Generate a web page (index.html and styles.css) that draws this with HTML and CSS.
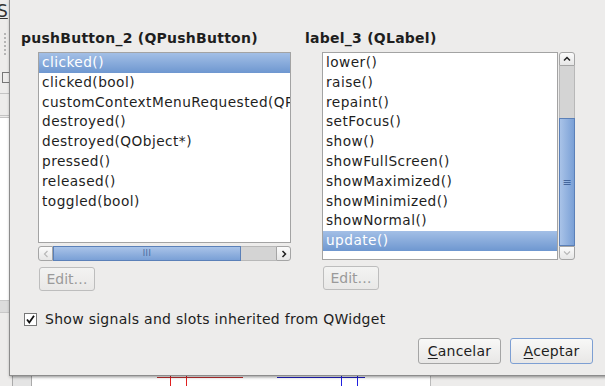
FILE: index.html
```html
<!DOCTYPE html>
<html lang="es">
<head>
    <meta charset="UTF-8">
    <title>Configurar conexión</title>
    <link rel="stylesheet" href="styles.css">
</head>
<body>
    <div class="desk">
        <!-- designer window behind the dialog -->
        <div class="bg-left">
            <span class="bg-letter">S</span>
            <div class="bg-grip"></div>
            <div class="bg-icon"></div>
            <div class="bg-white"></div>
            <div class="bg-bar"></div>
        </div>
        <div class="bg-right">
            <span class="bg-txt t1">e</span>
            <div class="bg-head"></div>
            <div class="bg-sel"></div>
            <div class="bg-rows"></div>
            <span class="bg-txt t2">lit</span>
            <div class="bg-box"></div>
            <span class="bg-txt t3">ge</span>
            <div class="bg-bar2"></div>
            <div class="bg-yel y1">op</div>
            <div class="bg-blue">ri</div>
            <div class="bg-yel y2">on</div>
            <span class="bg-txt t4">or</span>
        </div>
        <div class="bg-bottom">
            <div class="bb-col"></div>
            <div class="bb-line red"></div>
            <div class="bb-pair red"></div>
            <div class="bb-line blue"></div>
            <div class="bb-pair blue"></div>
            <div class="bb-edge"></div>
        </div>

        <div class="dialog">
            <div class="columns">
                <div class="col">
                    <h2 class="title">pushButton_2 (QPushButton)</h2>
                    <div class="list-wrap">
                        <ul class="list left-list">
                            <li class="sel">clicked()</li>
                            <li>clicked(bool)</li>
                            <li>customContextMenuRequested(QPoint)</li>
                            <li>destroyed()</li>
                            <li>destroyed(QObject*)</li>
                            <li>pressed()</li>
                            <li>released()</li>
                            <li>toggled(bool)</li>
                        </ul>
                        <div class="hscroll">
                            <span class="sb-btn off">
                                <svg width="6" height="8" viewBox="0 0 6 8"><path d="M4.5 1 L1.5 4 L4.5 7" fill="none" stroke="#b8b8b8" stroke-width="1.2"/></svg>
                            </span>
                            <span class="h-thumb"><span class="grip-h">III</span></span>
                            <span class="h-trough"></span>
                            <span class="sb-btn">
                                <svg width="6" height="8" viewBox="0 0 6 8"><path d="M1.5 1 L4.5 4 L1.5 7" fill="none" stroke="#222" stroke-width="1.5"/></svg>
                            </span>
                        </div>
                    </div>
                    <button class="edit" disabled>Edit…</button>
                </div>
                <div class="col">
                    <h2 class="title">label_3 (QLabel)</h2>
                    <div class="list-row">
                        <ul class="list right-list">
                            <li>lower()</li>
                            <li>raise()</li>
                            <li>repaint()</li>
                            <li>setFocus()</li>
                            <li>show()</li>
                            <li>showFullScreen()</li>
                            <li>showMaximized()</li>
                            <li>showMinimized()</li>
                            <li>showNormal()</li>
                            <li class="sel">update()</li>
                        </ul>
                        <div class="vscroll">
                            <span class="sb-btn v top">
                                <svg width="8" height="6" viewBox="0 0 8 6"><path d="M1 4.5 L4 1.5 L7 4.5" fill="none" stroke="#222" stroke-width="1.5"/></svg>
                            </span>
                            <span class="v-trough"></span>
                            <span class="v-thumb"><span class="grip-v">≡</span></span>
                            <span class="sb-btn v bottom off">
                                <svg width="8" height="6" viewBox="0 0 8 6"><path d="M1 1.5 L4 4.5 L7 1.5" fill="none" stroke="#b8b8b8" stroke-width="1.2"/></svg>
                            </span>
                        </div>
                    </div>
                    <button class="edit" disabled>Edit…</button>
                </div>
            </div>

            <label class="check">
                <span class="box">
                    <svg width="11" height="11" viewBox="0 0 11 11"><path d="M2 5.5 L4.3 8.5 L9 1.8" fill="none" stroke="#111" stroke-width="1.8"/></svg>
                </span>
                Show signals and slots inherited from QWidget
            </label>

            <div class="actions">
                <button class="btn"><u>C</u>ancelar</button>
                <button class="btn default"><u>A</u>ceptar</button>
            </div>
        </div>
    </div>
</body>
</html>
```

FILE: styles.css
```css
body {
    margin: 0;
    font-family: "DejaVu Sans", sans-serif;
    font-size: 14px;
    color: #1e1e1e;
    background: #edeceb;
}
.desk {
    position: relative;
    width: 605px;
    height: 386px;
    overflow: hidden;
    background: #edeceb;
}

/* ---- background window pieces ---- */
.bg-left {
    position: absolute;
    left: 0;
    top: 0;
    width: 10px;
    height: 386px;
}
.bg-letter {
    position: absolute;
    left: -3px;
    top: 1px;
    font-size: 17px;
    text-decoration: underline;
    color: #333;
}
.bg-grip {
    position: absolute;
    left: 4px;
    top: 33px;
    width: 2px;
    height: 22px;
    border-left: 2px dotted #b5b5b5;
}
.bg-icon {
    position: absolute;
    left: 2px;
    top: 72px;
    width: 6px;
    height: 9px;
    border: 1px solid #777;
}
.bg-white {
    position: absolute;
    left: 0;
    top: 93px;
    width: 10px;
    height: 21px;
    border-top: 1px solid #c4c4c4;
    border-bottom: 3px double #c4c4c4;
}
.bg-bar {
    position: absolute;
    left: 0;
    top: 300px;
    width: 10px;
    height: 11px;
    background: #dcdcdc;
    border-top: 1px solid #c8c8c8;
    border-bottom: 1px solid #c8c8c8;
}
.bg-left::after {
    content: "";
    position: absolute;
    left: 0;
    top: 118px;
    width: 10px;
    height: 182px;
    background: #fff;
}

.bg-right {
    position: absolute;
    left: 596px;
    top: 0;
    width: 9px;
    height: 386px;
    border-left: 1px solid #c9c9c9;
    font-size: 13px;
}
.bg-txt {
    position: absolute;
    left: 2px;
    color: #222;
}
.t1 { top: 66px; }
.t2 { top: 176px; }
.t3 { top: 247px; }
.t4 { top: 338px; }
.bg-head {
    position: absolute;
    left: 0;
    top: 92px;
    width: 9px;
    height: 20px;
    border-top: 1px solid #c4c4c4;
    background: #e6e6e6;
}
.bg-sel {
    position: absolute;
    left: 3px;
    top: 113px;
    width: 6px;
    height: 12px;
    background: #6f96cf;
}
.bg-rows {
    position: absolute;
    left: 0;
    top: 126px;
    width: 9px;
    height: 24px;
    background: #fff;
}
.bg-box {
    position: absolute;
    left: 0;
    top: 197px;
    width: 9px;
    height: 27px;
    background: #fff;
    border-top: 1px solid #bdbdbd;
    border-bottom: 1px solid #bdbdbd;
}
.bg-bar2 {
    position: absolute;
    left: 0;
    top: 269px;
    width: 9px;
    height: 20px;
    background: #e2e2e2;
    border-top: 1px solid #c4c4c4;
}
.bg-yel {
    position: absolute;
    left: 0;
    width: 9px;
    height: 17px;
    padding-left: 2px;
    background: #fbf7c4;
    line-height: 17px;
}
.y1 { top: 290px; }
.y2 { top: 323px; }
.bg-blue {
    position: absolute;
    left: 0;
    top: 306px;
    width: 9px;
    height: 17px;
    padding-left: 2px;
    background: #6f96cf;
    color: #fff;
    line-height: 17px;
}

.bg-bottom {
    position: absolute;
    left: 0;
    top: 376px;
    width: 605px;
    height: 10px;
    background: #fff;
}
.bb-col {
    position: absolute;
    left: 0;
    top: 0;
    width: 12px;
    height: 10px;
    background: #edeceb;
}
.bb-col::after {
    content: "";
    position: absolute;
    left: 12px;
    top: 0;
    width: 18px;
    height: 10px;
    background: #e4e4e4;
    border-left: 1px solid #aaa;
    border-right: 1px solid #aaa;
}
.bb-line {
    position: absolute;
    top: 1px;
    height: 1px;
}
.bb-line.red {
    left: 157px;
    width: 86px;
    background: #c03030;
}
.bb-line.blue {
    left: 277px;
    width: 88px;
    background: #2020c0;
}
.bb-pair {
    position: absolute;
    top: 0;
    width: 15px;
    height: 10px;
}
.bb-pair.red {
    left: 170px;
    border-left: 1px solid #e02020;
    border-right: 1px solid #e02020;
}
.bb-pair.blue {
    left: 341px;
    border-left: 1px solid #2020e0;
    border-right: 1px solid #2020e0;
}
.bb-edge {
    position: absolute;
    left: 430px;
    top: 0;
    width: 175px;
    height: 10px;
    background: #edeceb;
    border-left: 1px solid #bbb;
}

/* ---- dialog ---- */
.dialog {
    position: absolute;
    left: 9px;
    top: -1px;
    width: 572px;
    height: 346px;
    padding: 29px 13px 0 11px;
    background: #edeceb;
    border: 1px solid #8c8c8c;
    box-shadow: 1px 1px 3px rgba(0, 0, 0, 0.45);
    display: flex;
    flex-direction: column;
}
.columns {
    display: flex;
    gap: 14px;
}
.col {
    width: 270px;
}
.title {
    margin: 0 0 5px;
    height: 18px;
    font-size: 14px;
    line-height: 18px;
    font-weight: bold;
    letter-spacing: 0.25px;
    white-space: nowrap;
}
.list-wrap {
    margin-left: 17px;
    width: 253px;
}
.list {
    margin: 0;
    padding: 0;
    list-style: none;
    background: #fff;
    border: 1px solid #a3a3a3;
    overflow: hidden;
    font-size: 13.7px;
    letter-spacing: 0.45px;
}
.list li {
    height: 19.8px;
    line-height: 19.8px;
    padding-left: 3px;
    white-space: nowrap;
}
.list li.sel {
    color: #fff;
    background: linear-gradient(#a3bfe6, #6e97d0);
}
.left-list {
    height: 189px;
}
.right-list {
    width: 234px;
    height: 206px;
}
.list-row {
    display: flex;
    gap: 1px;
    margin-left: 17px;
}

/* scrollbars */
.hscroll {
    display: flex;
    height: 15px;
    margin-top: 3px;
}
.sb-btn {
    width: 13px;
    height: 13px;
    border: 1px solid #a5a5a5;
    background: linear-gradient(#fbfbfb, #e6e6e6);
    display: flex;
    align-items: center;
    justify-content: center;
}
.hscroll .sb-btn:first-child {
    border-radius: 3px 0 0 3px;
}
.hscroll .sb-btn:last-child {
    border-radius: 0 3px 3px 0;
}
.h-thumb {
    width: 186px;
    border: 1px solid #5b80b8;
    background: linear-gradient(#a9c3e8, #7aa0d6);
    display: flex;
    align-items: center;
    justify-content: center;
}
.grip-h {
    font-size: 8px;
    color: #44669c;
    letter-spacing: 0.5px;
}
.h-trough {
    flex: 1;
    background: #d4d4d4;
    border-top: 1px solid #b8b8b8;
    border-bottom: 1px solid #b8b8b8;
}
.vscroll {
    width: 16px;
    height: 208px;
    display: flex;
    flex-direction: column;
}
.sb-btn.v {
    width: 14px;
    height: 12px;
}
.sb-btn.top {
    border-radius: 3px 3px 0 0;
}
.sb-btn.bottom {
    border-radius: 0 0 3px 3px;
}
.v-trough {
    height: 52px;
    background: #d4d4d4;
    border-left: 1px solid #b8b8b8;
    border-right: 1px solid #b8b8b8;
}
.v-thumb {
    flex: 1;
    border: 1px solid #5b80b8;
    background: linear-gradient(90deg, #a9c3e8, #7aa0d6);
    display: flex;
    align-items: center;
    justify-content: center;
}
.grip-v {
    font-size: 11px;
    color: #44669c;
}

.edit {
    display: block;
    margin: 6px 0 0 18px;
    width: 56px;
    height: 24px;
    padding: 0;
    font-family: "DejaVu Sans", sans-serif;
    font-size: 14px;
    color: #9a9a9a;
    background: linear-gradient(#f3f3f2, #e9e8e7);
    border: 1px solid #bdbdbd;
    border-radius: 3px;
}

/* checkbox */
.check {
    display: flex;
    align-items: center;
    gap: 8px;
    margin: 20px 0 0 3px;
    font-size: 14px;
    letter-spacing: 0.28px;
}
.box {
    width: 11px;
    height: 11px;
    border: 1px solid #777;
    background: #fff;
    display: flex;
    align-items: center;
    justify-content: center;
}

.actions {
    display: flex;
    justify-content: flex-end;
    gap: 9px;
    margin-top: 11px;
}
.btn {
    width: 83px;
    height: 26px;
    padding: 0;
    font-family: "DejaVu Sans", sans-serif;
    font-size: 14px;
    letter-spacing: 0.2px;
    color: #1e1e1e;
    background: linear-gradient(#f8f8f7, #e8e7e6);
    border: 1px solid #a5a5a5;
    border-radius: 3px;
}
.btn.default {
    border-color: #7d9fd3;
}
.btn u {
    text-underline-offset: 2px;
}
```
